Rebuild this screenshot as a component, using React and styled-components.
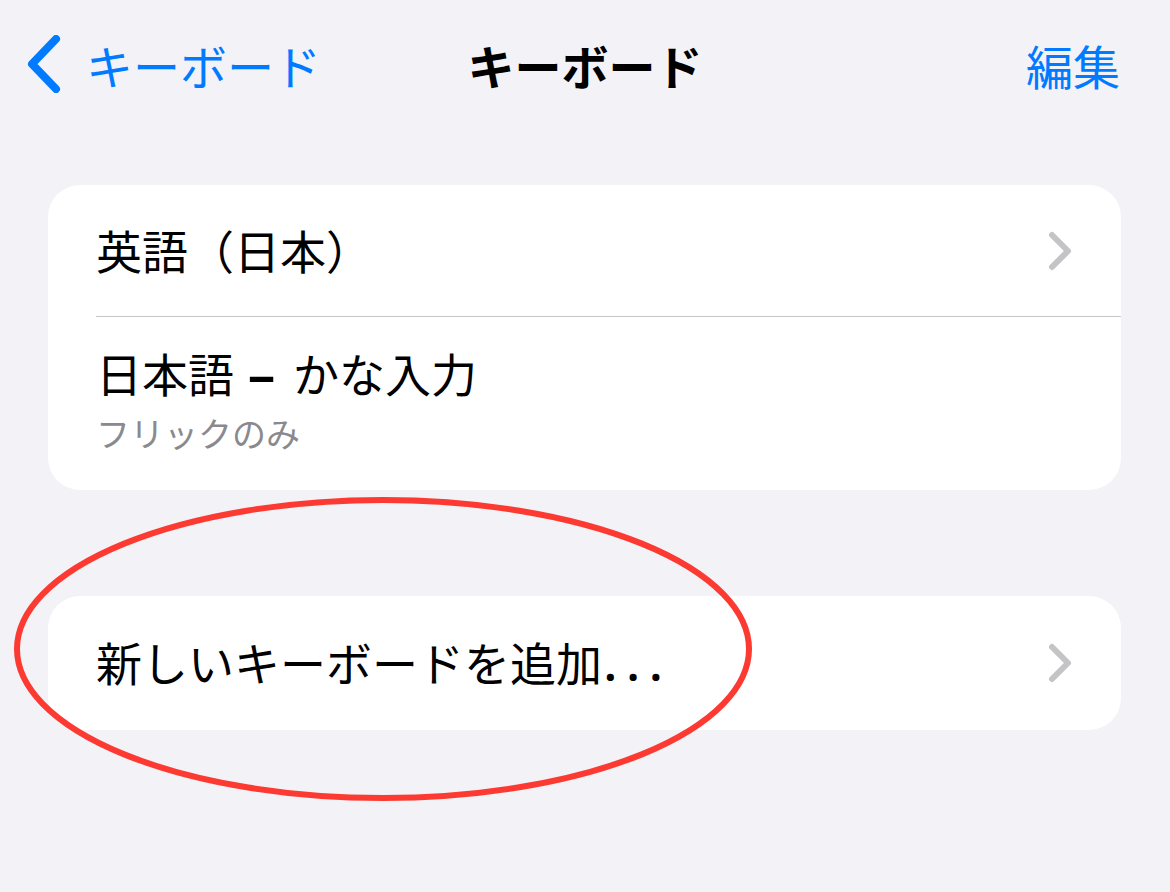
import React from 'react'
import styled, { createGlobalStyle } from 'styled-components'

const GlobalStyle = createGlobalStyle`
  html, body {
    margin: 0;
    padding: 0;
    background: #f2f2f7;
    font-family: 'Noto Sans', 'Noto Sans CJK JP', sans-serif;
    -webkit-font-smoothing: antialiased;
  }
`

function Chevron() {
  return (
    <ChevronSvg viewBox="0 0 24 40" width="24" height="40">
      <path d="M4 4 L20 20 L4 36" fill="none" stroke="#c4c4c7" strokeWidth="6" strokeLinecap="round" strokeLinejoin="round" />
    </ChevronSvg>
  )
}

function App() {
  return (
    <Page>
      <GlobalStyle />
      <NavBar>
        <BackButton>
          <svg viewBox="0 0 36 58" width="36" height="58">
            <path d="M30 4 L6 29 L30 54" fill="none" stroke="#007aff" strokeWidth="8" strokeLinecap="round" strokeLinejoin="round" />
          </svg>
          <NavLink>キーボード</NavLink>
        </BackButton>
        <Title>キーボード</Title>
        <EditButton>
          <NavLink>編集</NavLink>
        </EditButton>
      </NavBar>

      <Content>
        <Card>
          <Row height="131px">
            <RowText>
              <Label>英語（日本）</Label>
            </RowText>
            <Chevron />
          </Row>
          <Separator />
          <Row height="173px">
            <RowText>
              <Label>
                日本語<Dash>–</Dash>かな入力
              </Label>
              <SubLabel>フリックのみ</SubLabel>
            </RowText>
          </Row>
        </Card>

        <Card>
          <Row height="134px">
            <RowText>
              <Label>
                新しいキーボードを追加<Dots>...</Dots>
              </Label>
            </RowText>
            <Chevron />
          </Row>
        </Card>
      </Content>

      <Annotation viewBox="0 0 744 310" width="744" height="310">
        <ellipse cx="372" cy="155" rx="366" ry="149" fill="none" stroke="#fc3a32" strokeWidth="6" />
      </Annotation>
    </Page>
  )
}

const Page = styled.div`
  position: relative;
  width: 1170px;
  height: 892px;
  overflow: hidden;
  background: #f2f2f7;
`

const NavBar = styled.div`
  height: 128px;
  display: grid;
  grid-template-columns: 1fr auto 1fr;
  align-items: center;
  padding: 0 50px;
  box-sizing: border-box;
`

const BackButton = styled.div`
  display: flex;
  align-items: center;
  gap: 24px;
  margin-left: -24px;
`

const EditButton = styled.div`
  display: flex;
  justify-content: flex-end;
`

const NavLink = styled.span`
  font-family: 'Noto Sans CJK JP', sans-serif;
  font-size: 47px;
  color: #007aff;
  line-height: 1;
`

const Title = styled.span`
  font-family: 'Noto Sans CJK JP', sans-serif;
  font-size: 47px;
  font-weight: 700;
  color: #000;
  line-height: 1;
`

const Content = styled.div`
  display: flex;
  flex-direction: column;
  gap: 106px;
  padding: 57px 49px 0 48px;
`

const Card = styled.div`
  background: #fff;
  border-radius: 32px;
  overflow: hidden;
`

const Row = styled.div`
  height: ${(p) => p.height};
  display: flex;
  align-items: center;
  justify-content: space-between;
  padding: 0 49px 0 48px;
`

const RowText = styled.div`
  display: flex;
  flex-direction: column;
`

const Label = styled.span`
  font-size: 46px;
  line-height: 58px;
  color: #000;
`

const Dash = styled.span`
  display: inline-block;
  font-weight: 700;
  margin: 0 20px 0 16px;
  transform: scaleX(1.2);
`

const Dots = styled.span`
  font-weight: 600;
  letter-spacing: 10px;
  margin-left: 2px;
`

const SubLabel = styled.span`
  font-family: 'Noto Sans CJK JP', sans-serif;
  font-size: 34px;
  line-height: 60px;
  color: #8a8a8e;
`

const Separator = styled.div`
  height: 1px;
  margin-left: 48px;
  background: #c6c6c8;
`

const ChevronSvg = styled.svg`
  display: block;
`

const Annotation = styled.svg`
  position: absolute;
  left: 11px;
  top: 494px;
  pointer-events: none;
`

export default App
